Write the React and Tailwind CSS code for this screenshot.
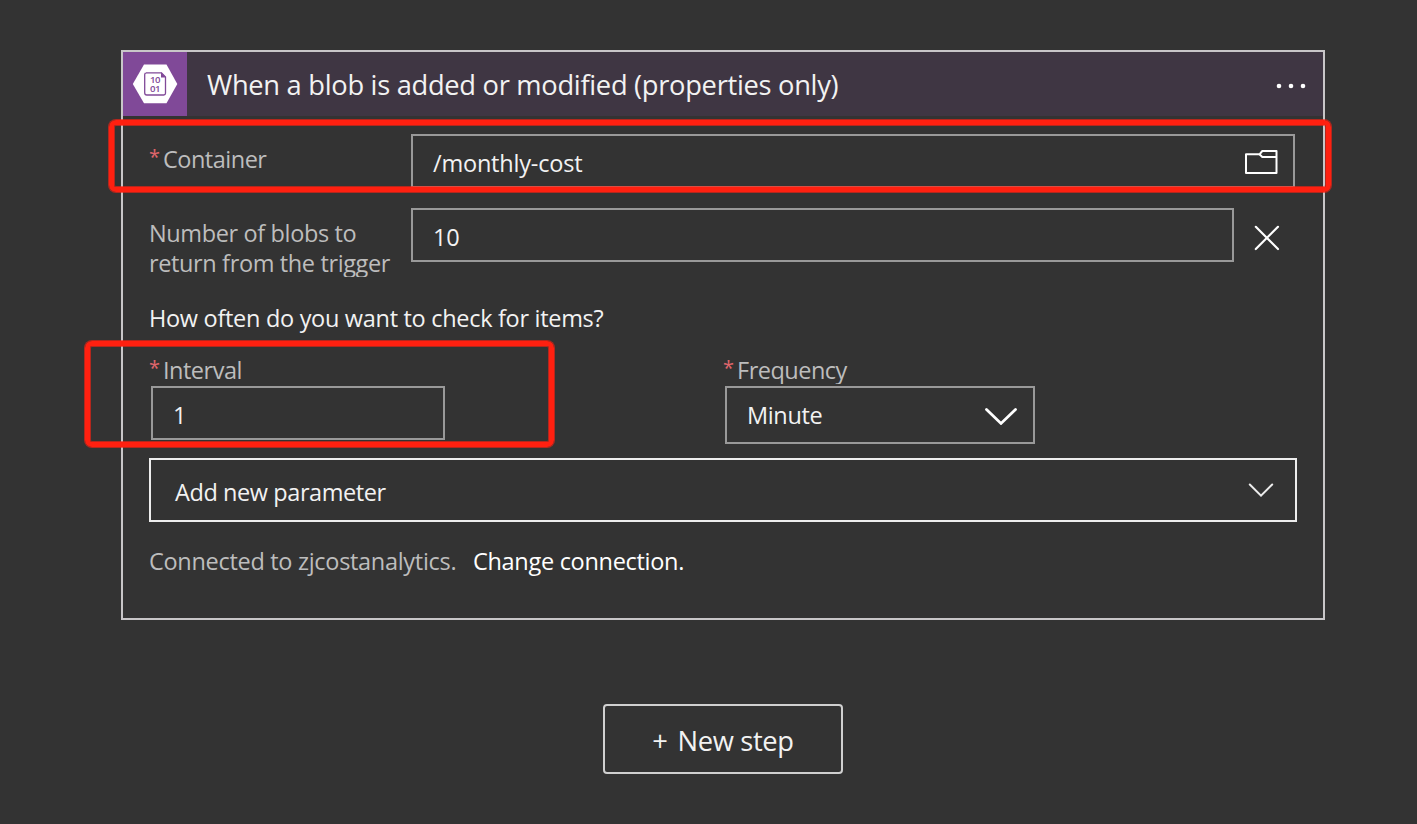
function Required({ children }) {
  return (
    <span className="flex">
      <span className="w-[14px] text-[20px] leading-[26px] text-[#e0666c] tracking-normal">*</span>
      {children}
    </span>
  );
}

function BlobIcon() {
  return (
    <svg className="size-16 shrink-0 bg-[#804998]" viewBox="0 0 64 64">
      <path d="M21 12.5H43.5L54.3 32 43.5 51.3H21L9.8 32Z" fill="#fff" />
      <path d="M22.9 20.8H38.5L42.5 24.9V41.2Q42.5 43 40.7 43H23.8Q21.7 43 21.7 40.8V22.6Q21.7 20.8 23.5 20.8Z" fill="none" stroke="#804998" strokeWidth="1.3" />
      <path d="M38 20.3V25.4H43.1Z" fill="#804998" />
      <text x="27" y="31" fill="#804998" fontFamily="Open Sans, sans-serif" fontSize="9.6" fontWeight="600" letterSpacing="-0.4">
        10
        <tspan x="27" y="40">01</tspan>
      </text>
    </svg>
  );
}

export default function App() {
  return (
    <div className="relative h-[824px] w-[1417px] overflow-hidden bg-[#333333] pl-[121px] pt-[50px] font-['Open_Sans',sans-serif] text-[23.5px] font-[450] leading-[30px] text-[#f2f2f2]">
      <main className="h-[570px] w-[1204px] border-2 border-[#c8c6c8]">
        <header className="flex h-16 items-center bg-[#3f3643]">
          <BlobIcon />
          <h1 className="ml-5 flex-1 whitespace-nowrap pt-[2px] text-[27.3px] font-[450] tracking-[-0.3px]">When a blob is added or modified (properties only)</h1>
          <svg className="mr-[15px] h-8 w-8" viewBox="0 0 32 32" fill="#fff">
            <circle cx="3" cy="18" r="2.3" />
            <circle cx="15" cy="18" r="2.3" />
            <circle cx="27" cy="18" r="2.3" />
          </svg>
        </header>

        <section className="px-[26px] pt-[18px]">
          <div className="flex h-[54px]">
            <label className="w-[262px] pt-[10px] tracking-[-0.5px] text-[#bdbdbd]"><Required>Container</Required></label>
            <div className="flex w-[884px] items-center justify-between border-2 border-[#999] pl-[20px] pr-[15px]">
              <span className="pt-[4px] tracking-[-0.2px]">/monthly-cost</span>
              <svg className="h-7 w-[34px]" viewBox="0 0 34 28" fill="none" stroke="#fff" strokeWidth="2" strokeLinejoin="round">
                <path d="M2 7.3H15.5L18.3 4H32.5V26H2Z" />
                <path d="M15.5 7.3L18.3 10H32.5" />
              </svg>
            </div>
          </div>

          <div className="mt-5 flex h-[54px]">
            <label className="h-[69px] w-[262px] overflow-hidden whitespace-nowrap pt-[10px] tracking-[-0.37px] text-[#bdbdbd]">
              <span className="block">Number of blobs to</span>
              <span className="block">return from the trigger</span>
            </label>
            <div className="flex w-[823px] items-center border-2 border-[#999] pl-[20px] pt-[4px] tracking-[-0.3px]">10</div>
            <svg className="ml-5 mt-[17px] size-[26px]" viewBox="0 0 26 26" fill="none" stroke="#fff" strokeWidth="2.2" strokeLinecap="round">
              <path d="M1.8 1.8L24 24M24 1.8L1.8 24" />
            </svg>
          </div>

          <p className="mt-[41px] tracking-[-0.3px]">How often do you want to check for items?</p>

          <div className="mt-[22px] flex">
            <div className="w-[574px]">
              <label className="block h-[31px] tracking-[-0.5px] text-[#bdbdbd]"><Required>Interval</Required></label>
              <div className="ml-[2px] flex h-[54px] w-[294px] items-center border-2 border-[#999] pl-[20px] pt-[4px]">1</div>
            </div>
            <div>
              <label className="mb-[2px] block h-[29px] overflow-hidden tracking-[-0.5px] text-[#bdbdbd]"><Required>Frequency</Required></label>
              <div className="ml-[2px] flex h-[58px] w-[310px] items-center justify-between border-2 border-[#999] pl-[20px] pr-[15px]">
                <span className="tracking-[-0.35px]">Minute</span>
                <svg className="h-5 w-[34px]" viewBox="0 0 34 20" fill="none" stroke="#fff" strokeWidth="2.8" strokeLinecap="round">
                  <path d="M2.5 4.4L17 18.4L31.5 4.4" />
                </svg>
              </div>
            </div>
          </div>

          <div className="mt-[14px] flex h-16 items-center justify-between border-2 border-[#ededed] pl-6 pr-[21px]">
            <span className="pt-[4px] tracking-[-0.42px]">Add new parameter</span>
            <svg className="h-4 w-[26px]" viewBox="0 0 26 16" fill="none" stroke="#ededed" strokeWidth="2" strokeLinecap="round">
              <path d="M1.8 2.5L13 13.6L24.2 2.5" />
            </svg>
          </div>

          <p className="mt-[24px] flex whitespace-nowrap tracking-[-0.3px]">
            <span className="w-[324px] text-[#bdbdbd]">Connected to zjcostanalytics.</span>
            <a className="text-white">Change connection.</a>
          </p>
        </section>
      </main>

      <button className="ml-[482px] mt-[84px] flex h-[70px] w-[240px] items-center justify-center gap-[10px] rounded-[4px] border-2 border-[#d0d0d0] pt-[3px] text-[27.3px] font-[450] tracking-[-0.35px]">
        <span>+</span>
        <span>New step</span>
      </button>

      <div className="absolute left-[109px] top-[120px] h-[72px] w-[1222px] rounded-[7px] border-[5px] border-[#ff2010] shadow-[0_0_0_1px_#ff2010a0,inset_0_0_0_1px_#ff2010a0]" />
      <div className="absolute left-[85px] top-[341px] h-[106px] w-[469px] rounded-[7px] border-[5px] border-[#ff2010] shadow-[0_0_0_1px_#ff2010a0,inset_0_0_0_1px_#ff2010a0]" />
    </div>
  );
}
